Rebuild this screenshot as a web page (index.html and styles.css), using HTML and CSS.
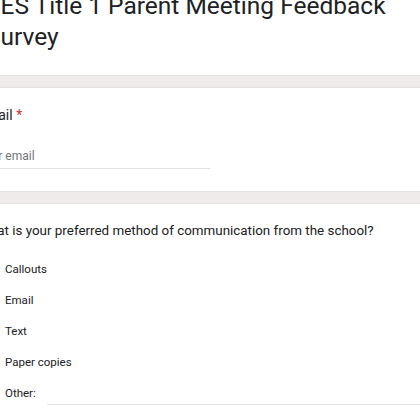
FILE: index.html
```html
<!DOCTYPE html>
<html>
<head>
<meta charset="utf-8">
<link rel="stylesheet" href="styles.css">
</head>
<body>
<div class="page">
  <section class="card title-card">
    <h1 class="form-title">SES Title 1 Parent Meeting Feedback<br>Survey</h1>
  </section>
  <section class="card">
    <div class="q-label">Email <span class="req">*</span></div>
    <div class="text-input">Your email</div>
  </section>
  <section class="card last-card">
    <div class="q-title">What is your preferred method of communication from the school?</div>
    <ul class="options">
      <li class="opt"><span class="box"></span><span>Callouts</span></li>
      <li class="opt"><span class="box"></span><span>Email</span></li>
      <li class="opt"><span class="box"></span><span>Text</span></li>
      <li class="opt"><span class="box"></span><span>Paper copies</span></li>
      <li class="opt"><span class="box"></span><span>Other:</span><span class="other-line"></span></li>
    </ul>
  </section>
</div>
</body>
</html>
```
FILE: styles.css
```css
html, body {
  margin: 0;
  padding: 0;
  background: #efebeb;
  overflow: hidden;
}
body {
  width: 420px;
  height: 420px;
}
.page {
  margin-left: -22px;
  width: 460px;
  display: flex;
  flex-direction: column;
  gap: 11px;
}
.card {
  background: #fff;
  border-top: 1px solid #e6e2e2;
  border-bottom: 1px solid #e6e2e2;
  padding: 0;
  color: #202124;
}
.title-card {
  border-top: none;
  padding-left: 8px;
  margin-top: -10px;
  padding-bottom: 23px;
}
.form-title {
  margin: 0;
  font-family: "Roboto", sans-serif;
  font-weight: 400;
  font-size: 24.5px;
  line-height: 31px;
  color: #202124;
}
.q-label {
  font-family: "Roboto", sans-serif;
  font-size: 14px;
  line-height: 20px;
  padding-top: 17px;
}
.req { color: #d93025; }
.text-input {
  margin-top: 24px;
  width: 232px;
  font-family: "Roboto", sans-serif;
  font-size: 12px;
  color: #70757a;
  padding-bottom: 5px;
  border-bottom: 1px solid #e3e3e3;
  margin-bottom: 22px;
}
.q-title {
  font-family: "Roboto", sans-serif;
  font-size: 13.4px;
  line-height: 20px;
  padding-top: 17px;
}
.options {
  list-style: none;
  margin: 18px 0 0 0;
  padding: 0 0 40px 0;
  display: flex;
  flex-direction: column;
  gap: 11px;
}
.opt {
  display: flex;
  align-items: center;
  height: 20px;
  font-family: "Roboto", sans-serif;
  font-size: 11.5px;
  color: #202124;
  gap: 7px;
}
.box {
  width: 20px;
  height: 20px;
}
.other-line {
  flex: 1;
  align-self: flex-end;
  border-bottom: 1px solid #e3e3e3;
  margin-left: 4px;
  margin-bottom: -2px;
}
```
